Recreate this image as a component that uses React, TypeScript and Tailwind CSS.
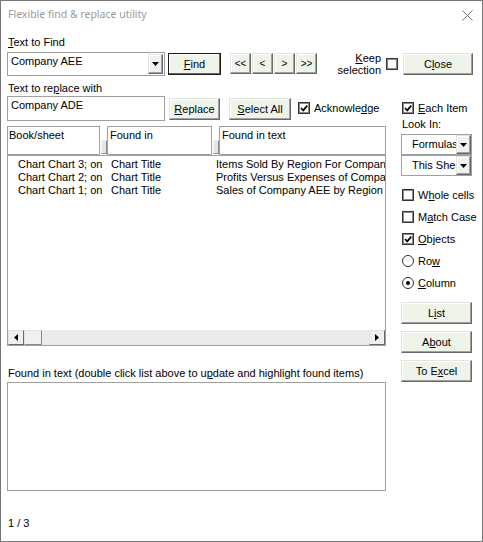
import React from "react";

const U = ({ children }: { children: React.ReactNode }) => (
  <span className="underline underline-offset-[1px] decoration-1">{children}</span>
);

const btn =
  "flex items-center justify-center bg-[#eef4ea] border border-t-[#e3e3e3] border-l-[#e3e3e3] border-r-[#696969] border-b-[#696969] shadow-[inset_-1px_-1px_0_#a0a0a0,inset_1px_1px_0_#ffffff] leading-none text-black";

const btnDefault =
  "flex items-center justify-center bg-[#eef4ea] border border-[#1a1a1a] shadow-[inset_-1px_-1px_0_#696969,inset_1px_1px_0_#ffffff] leading-none text-black";

function Check({ checked }: { checked?: boolean }) {
  return (
    <div className="w-[12px] h-[12px] border border-[#333333] shadow-[inset_0_0_0_1px_#8a8a8a] bg-white flex items-center justify-center shrink-0">
      {checked && (
        <svg width="10" height="10" viewBox="0 0 10 10">
          <path d="M2 5 L4.2 7.3 L8.3 2.6" stroke="#000" strokeWidth="1.8" fill="none" />
        </svg>
      )}
    </div>
  );
}

function Radio({ checked }: { checked?: boolean }) {
  return (
    <div className="w-[12px] h-[12px] rounded-full border border-[#333333] bg-white flex items-center justify-center shrink-0">
      {checked && <div className="w-[4px] h-[4px] rounded-full bg-black" />}
    </div>
  );
}

function DropBtn() {
  return (
    <div className="w-[15px] h-full bg-[#f0f0f0] border border-t-[#e3e3e3] border-l-[#e3e3e3] border-r-[#696969] border-b-[#696969] shadow-[inset_-1px_-1px_0_#a0a0a0,inset_1px_1px_0_#ffffff] flex items-center justify-center shrink-0">
      <svg width="7" height="4" viewBox="0 0 7 4">
        <path d="M0 0 H7 L3.5 4 Z" fill="#000" />
      </svg>
    </div>
  );
}

function Grip() {
  return (
    <div className="w-[7px] h-full flex flex-col justify-end items-center pb-[1px]">
      <div className="w-[6px] h-[14px] bg-[#e6e6e6] border border-t-[#f4f4f4] border-l-[#f4f4f4] border-r-[#8a8a8a] border-b-[#8a8a8a]" />
    </div>
  );
}

const rows = [
  ["Chart Chart 3; on", "Chart Title", "Items Sold By Region For Company AEE"],
  ["Chart Chart 2; on", "Chart Title", "Profits Versus Expenses of Company AEE"],
  ["Chart Chart 1; on", "Chart Title", "Sales of Company AEE by Region"],
];

export default function App() {
  return (
    <div className="w-[483px] h-[542px] bg-white border border-[#767676] flex flex-col font-['Liberation_Sans',Arial,sans-serif] text-[11px] text-black overflow-hidden">
      {/* title bar */}
      <div className="h-[28px] flex items-center justify-between pl-[7px] pr-[9px] shrink-0">
        <span className="font-['Noto_Sans',sans-serif] text-[10.5px] text-[#9a9a9a]">
          Flexible find &amp; replace utility
        </span>
        <svg width="11" height="11" viewBox="0 0 11 11">
          <path d="M0.5 0.5 L10.5 10.5 M10.5 0.5 L0.5 10.5" stroke="#6e6e6e" strokeWidth="1" />
        </svg>
      </div>

      <div className="pl-[6px] flex flex-col">
        {/* Text to find label */}
        <div className="mt-[7px] leading-[13px] pl-[1px]">
          <U>T</U>ext to Find
        </div>

        {/* row 2 */}
        <div className="mt-[3px] h-[24px] flex items-start">
          <div className="w-[158px] h-[24px] border border-[#a0a0a0] flex">
            <div className="flex-1 pl-[3px] pt-[2px] leading-[13px]">Company AEE</div>
            <div className="h-[20px] mt-[1px] mr-[1px]">
              <DropBtn />
            </div>
          </div>
          <div className={`${btnDefault} ml-[3px] mt-[1px] w-[53px] h-[22px]`}>
            <U>F</U>ind
          </div>
          <div className="ml-[9px] mt-[1px] flex gap-[1px]">
            <div className={`${btn} w-[21px] h-[21px] text-[10px]`}>&lt;&lt;</div>
            <div className={`${btn} w-[21px] h-[21px] text-[10px]`}>&lt;</div>
            <div className={`${btn} w-[21px] h-[21px] text-[10px]`}>&gt;</div>
            <div className={`${btn} w-[21px] h-[21px] text-[10px]`}>&gt;&gt;</div>
          </div>
          <div className="ml-[6px] w-[58px] text-right leading-[12px]">
            <div>
              <U>K</U>eep
            </div>
            <div>selection</div>
          </div>
          <div className="ml-[5px] self-center">
            <Check />
          </div>
          <div className={`${btn} ml-[5px] mt-[1px] w-[70px] h-[22px]`}>
            C<U>l</U>ose
          </div>
        </div>

        {/* replace label */}
        <div className="mt-[6px] leading-[13px] pl-[1px]">
          Text to re<U>p</U>lace with
        </div>

        {/* lower section */}
        <div className="mt-[1px] flex">
          {/* left column */}
          <div className="w-[394px] flex flex-col">
            <div className="h-[25px] flex items-start">
              <div className="w-[158px] h-[25px] border border-[#a0a0a0] pl-[3px] pt-[2px] leading-[13px]">
                Company ADE
              </div>
              <div className={`${btn} ml-[4px] mt-[2px] w-[51px] h-[22px]`}>
                <U>R</U>eplace
              </div>
              <div className={`${btn} ml-[9px] mt-[2px] w-[62px] h-[22px]`}>
                <U>S</U>elect All
              </div>
              <div className="ml-[7px] mt-[6px] flex items-center">
                <Check checked />
                <span className="ml-[4px] leading-[12px]">
                  Acknowle<U>d</U>ge
                </span>
              </div>
            </div>

            {/* list headers */}
            <div className="mt-[5px] h-[29px] w-[379px] flex">
              <div className="w-[93px] h-full border border-[#a0a0a0] pl-[1px] pt-[2px] leading-[13px]">
                Book/sheet
              </div>
              <Grip />
              <div className="w-[105px] h-full border border-[#a0a0a0] pl-[2px] pt-[2px] leading-[13px]">
                Found in
              </div>
              <Grip />
              <div className="w-[167px] h-full border border-[#a0a0a0] pl-[2px] pt-[2px] leading-[13px]">
                Found in text
              </div>
            </div>

            {/* list */}
            <div className="w-[379px] h-[191px] border border-[#a0a0a0] flex flex-col">
              <div className="flex-1 pt-[2px] overflow-hidden">
                {rows.map((r, i) => (
                  <div key={i} className="flex leading-[13px] whitespace-nowrap pl-[10px]">
                    <div className="w-[93px] overflow-hidden">{r[0]}</div>
                    <div className="w-[105px] overflow-hidden">{r[1]}</div>
                    <div className="flex-1 overflow-hidden">{r[2]}</div>
                  </div>
                ))}
              </div>
              <div className="h-[15px] flex shrink-0">
                <div className="w-[16px] h-full bg-[#f0f0f0] border border-t-[#e3e3e3] border-l-[#e3e3e3] border-r-[#696969] border-b-[#696969] flex items-center justify-center">
                  <svg width="4" height="7" viewBox="0 0 4 7">
                    <path d="M4 0 V7 L0 3.5 Z" fill="#000" />
                  </svg>
                </div>
                <div className="w-[18px] h-full bg-[#f0f0f0] border border-t-[#e3e3e3] border-l-[#e3e3e3] border-r-[#8a8a8a] border-b-[#8a8a8a]" />
                <div className="flex-1 h-full bg-[#ebebeb]" />
                <div className="w-[16px] h-full bg-[#f0f0f0] border border-t-[#e3e3e3] border-l-[#e3e3e3] border-r-[#696969] border-b-[#696969] flex items-center justify-center">
                  <svg width="4" height="7" viewBox="0 0 4 7">
                    <path d="M0 0 V7 L4 3.5 Z" fill="#000" />
                  </svg>
                </div>
              </div>
            </div>

            <div className="mt-[21px] leading-[13px] pl-[1px] whitespace-nowrap">
              Found in text (double click list above to u<U>p</U>date and highlight found items)
            </div>
            <div className="mt-[2px] w-[379px] h-[109px] border border-[#a0a0a0]" />
            <div className="mt-[26px] leading-[13px] pl-[1px]">1 / 3</div>
          </div>

          {/* right column */}
          <div className="w-[72px] flex flex-col">
            <div className="mt-[6px] h-[12px] flex items-center pl-[1px] whitespace-nowrap">
              <Check checked />
              <span className="ml-[4px]">
                <U>E</U>ach Item
              </span>
            </div>
            <div className="mt-[4px] leading-[13px] pl-[1px]">Look In:</div>
            <div className="mt-[3px] w-[71px] h-[21px] border border-[#a0a0a0] flex">
              <div className="flex-1 pl-[10px] overflow-hidden whitespace-nowrap self-center leading-[13px]">
                Formulas
              </div>
              <DropBtn />
            </div>
            <div className="w-[71px] h-[21px] border border-[#a0a0a0] flex">
              <div className="flex-1 pl-[10px] overflow-hidden whitespace-nowrap self-center leading-[13px]">
                This Sheet
              </div>
              <DropBtn />
            </div>

            <div className="mt-[13px] h-[12px] flex items-center pl-[1px] whitespace-nowrap">
              <Check />
              <span className="ml-[4px]">
                W<U>h</U>ole cells
              </span>
            </div>
            <div className="mt-[10px] h-[12px] flex items-center pl-[1px] whitespace-nowrap">
              <Check />
              <span className="ml-[4px]">
                M<U>a</U>tch Case
              </span>
            </div>
            <div className="mt-[10px] h-[12px] flex items-center pl-[1px] whitespace-nowrap">
              <Check checked />
              <span className="ml-[4px]">
                <U>O</U>bjects
              </span>
            </div>
            <div className="mt-[10px] h-[12px] flex items-center pl-[1px] whitespace-nowrap">
              <Radio />
              <span className="ml-[4px]">
                Ro<U>w</U>
              </span>
            </div>
            <div className="mt-[10px] h-[12px] flex items-center pl-[1px] whitespace-nowrap">
              <Radio checked />
              <span className="ml-[4px]">
                <U>C</U>olumn
              </span>
            </div>

            <div className={`${btn} mt-[13px] w-[71px] h-[22px]`}>
              L<U>i</U>st
            </div>
            <div className={`${btn} mt-[7px] w-[71px] h-[22px]`}>
              A<U>b</U>out
            </div>
            <div className={`${btn} mt-[7px] w-[71px] h-[22px]`}>
              To E<U>x</U>cel
            </div>
          </div>
        </div>
      </div>
    </div>
  );
}
